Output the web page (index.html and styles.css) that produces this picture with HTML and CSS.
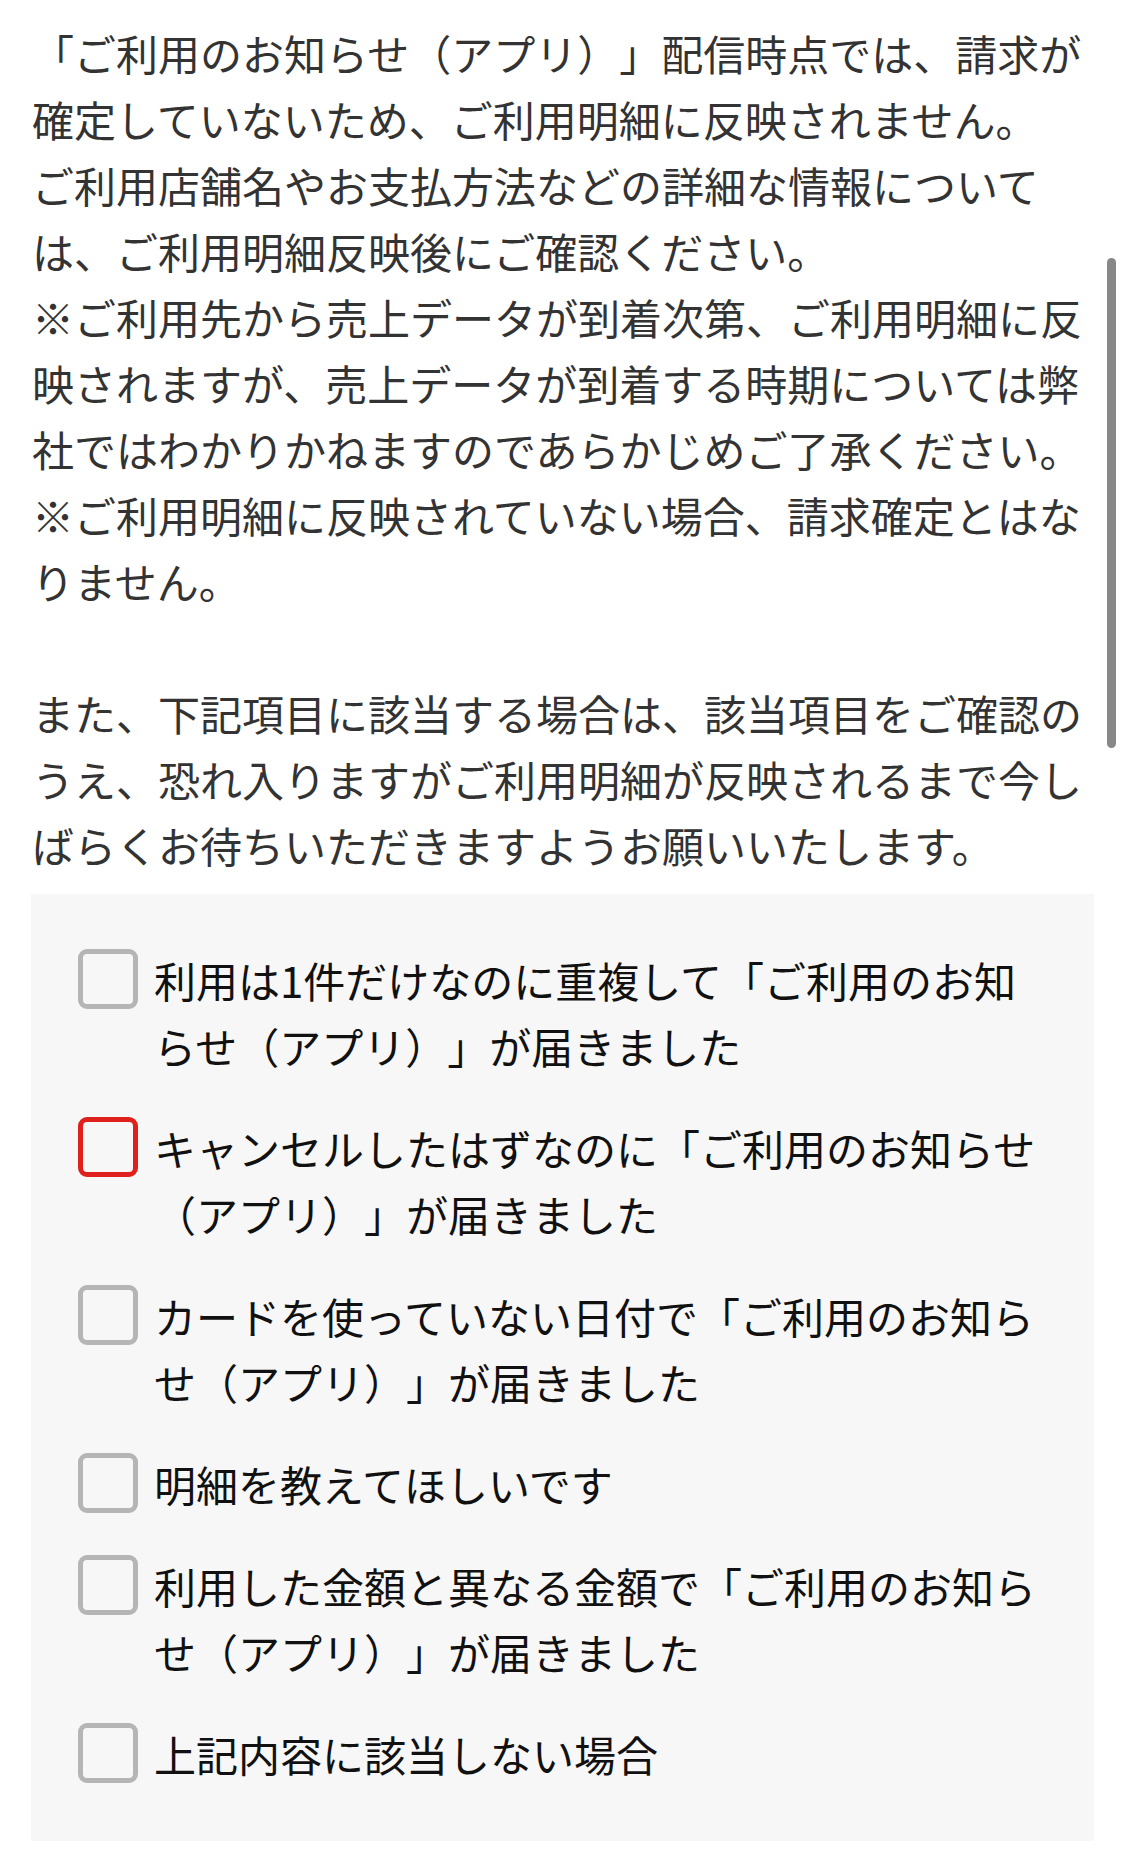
FILE: index.html
```html
<!DOCTYPE html>
<html lang="ja">
<head>
<meta charset="utf-8">
<title>ご利用のお知らせ</title>
<link rel="stylesheet" href="styles.css">
</head>
<body>
<main class="page">
  <p class="notice">「ご利用のお知らせ（アプリ）」配信時点では、請求が確定していないため、ご利用明細に反映されません。<br>ご利用店舗名やお支払方法などの詳細な情報については、ご利用明細反映後にご確認ください。<br>※ご利用先から売上データが到着次第、ご利用明細に反映されますが、売上データが到着する時期については弊社ではわかりかねますのであらかじめご了承ください。<br>※ご利用明細に反映されていない場合、請求確定とはなりません。<br><br>また、下記項目に該当する場合は、該当項目をご確認のうえ、恐れ入りますがご利用明細が反映されるまで今しばらくお待ちいただきますようお願いいたします。</p>
  <ul class="options">
    <li class="option"><span class="box"></span><span class="label">利用は1件だけなのに重複して「ご利用のお知らせ（アプリ）」が届きました</span></li>
    <li class="option"><span class="box box-active"></span><span class="label">キャンセルしたはずなのに「ご利用のお知らせ（アプリ）」が届きました</span></li>
    <li class="option"><span class="box"></span><span class="label">カードを使っていない日付で「ご利用のお知らせ（アプリ）」が届きました</span></li>
    <li class="option"><span class="box"></span><span class="label">明細を教えてほしいです</span></li>
    <li class="option"><span class="box"></span><span class="label">利用した金額と異なる金額で「ご利用のお知らせ（アプリ）」が届きました</span></li>
    <li class="option"><span class="box"></span><span class="label">上記内容に該当しない場合</span></li>
  </ul>
</main>
<div class="scrollbar"></div>
</body>
</html>
```

FILE: styles.css
```css
html, body {
  margin: 0;
  padding: 0;
  background: #ffffff;
}

body {
  font-family: "Noto Sans CJK JP", "Noto Sans", sans-serif;
  font-size: 42px;
  line-height: 66px;
  text-spacing-trim: space-all;
}

.page {
  padding: 20px 31px 0 31px;
}

.notice {
  margin: 0 0 0 1px;
  color: #333333;
}

.options {
  list-style: none;
  margin: 16px 0 0 0;
  padding: 53px 50px 54px 47px;
  background: #f7f7f7;
  display: flex;
  flex-direction: column;
  gap: 36px;
}

.option {
  display: flex;
  align-items: flex-start;
  gap: 16px;
  color: #111111;
}

.box {
  flex: 0 0 auto;
  width: 60px;
  height: 60px;
  box-sizing: border-box;
  border: 5px solid #b5b5b5;
  border-radius: 9px;
  margin-top: 2px;
  background: transparent;
}

.box-active {
  border-color: #e0201c;
}

.label {
  flex: 1 1 auto;
}

.scrollbar {
  position: fixed;
  top: 258px;
  left: 1107px;
  width: 9px;
  height: 490px;
  border-radius: 5px;
  background: #888888;
}
```
